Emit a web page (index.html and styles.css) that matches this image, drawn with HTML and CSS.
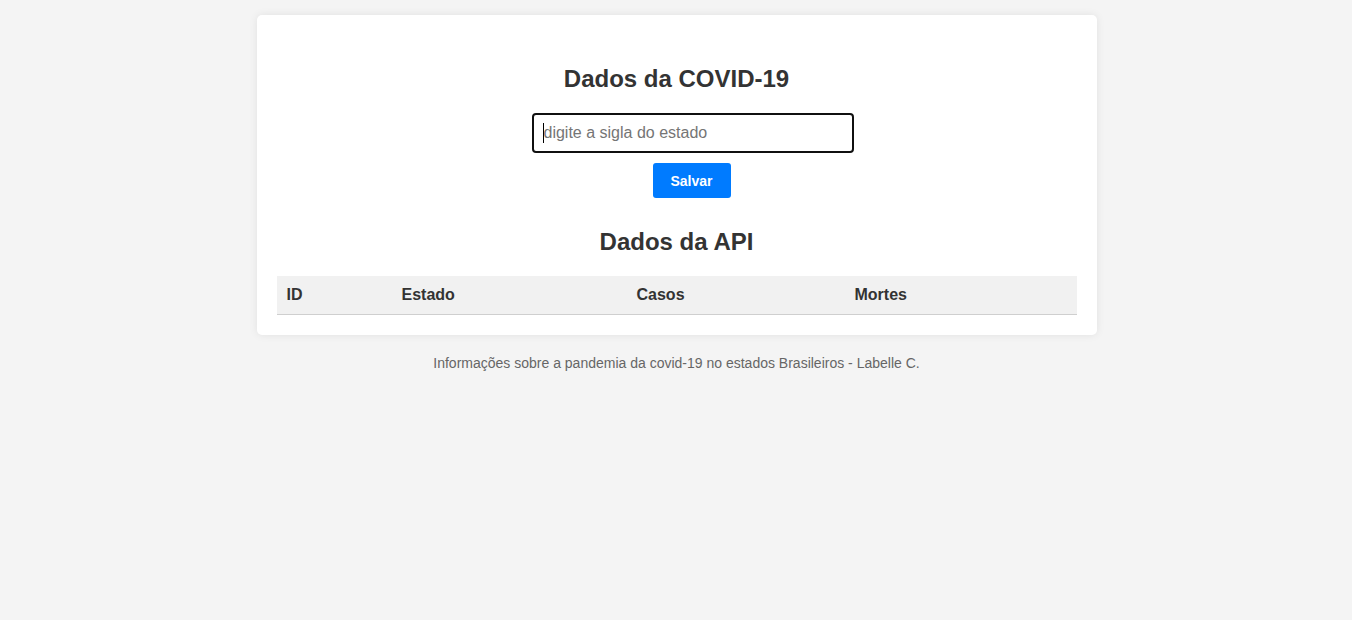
FILE: index.html
```html
<!DOCTYPE html>
<html lang="pt-BR">
<head>
<meta charset="utf-8">
<title>Dados da COVID-19</title>
<link rel="stylesheet" href="styles.css">
</head>
<body>
  <main class="card">
    <h2 class="title">Dados da COVID-19</h2>
    <form class="form">
      <div class="field">
        <input class="input" type="text" placeholder="digite a sigla do estado">
        <span class="caret"></span>
      </div>
      <button class="btn" type="button">Salvar</button>
    </form>
    <h2 class="title">Dados da API</h2>
    <table class="table">
      <thead>
        <tr>
          <th class="c-id">ID</th>
          <th class="c-estado">Estado</th>
          <th class="c-casos">Casos</th>
          <th class="c-mortes">Mortes</th>
        </tr>
      </thead>
      <tbody></tbody>
    </table>
  </main>
  <footer class="footer">Informações sobre a pandemia da covid-19 no estados Brasileiros - Labelle C.</footer>
</body>
</html>
```
FILE: styles.css
```css
html, body {
  margin: 0;
  padding: 0;
}
body {
  background: #f4f4f4;
  font-family: "Liberation Sans", Arial, sans-serif;
  color: #333;
  padding: 15px 0 0 1px;
}
.card {
  max-width: 800px;
  margin: 0 auto;
  background: #fff;
  padding: 30px 20px 20px;
  border-radius: 5px;
  box-shadow: 0 0 8px rgba(0, 0, 0, 0.08);
}
.title {
  font-size: 24px;
  font-weight: bold;
  text-align: center;
  margin: 20px 0;
  color: #333;
}
.form {
  display: flex;
  flex-direction: column;
  align-items: center;
  padding-left: 32px;
}
.field {
  position: relative;
}
.input {
  box-sizing: border-box;
  width: 322px;
  height: 40px;
  padding: 0 10px;
  border: 2px solid #101010;
  border-radius: 4px;
  font-family: "Liberation Sans", Arial, sans-serif;
  font-size: 16px;
  color: #333;
  outline: none;
  display: block;
}
.input::placeholder {
  color: #757575;
}
.caret {
  position: absolute;
  left: 11px;
  top: 10px;
  width: 1px;
  height: 20px;
  background: #000;
}
.btn {
  margin: 10px 2px 10px 0;
  width: 78px;
  height: 35px;
  background: #007bff;
  color: #fff;
  border: none;
  border-radius: 3px;
  font-family: "Liberation Sans", Arial, sans-serif;
  font-size: 14px;
  font-weight: bold;
  padding: 0;
}
.table {
  width: 100%;
  border-collapse: collapse;
}
.table th {
  background: #f1f1f1;
  text-align: left;
  font-size: 16px;
  font-weight: bold;
  color: #333;
  padding: 0 10px;
  height: 38px;
  border-bottom: 1px solid #cfcfcf;
}
.c-id { width: 95px; }
.c-estado { width: 215px; }
.c-casos { width: 198px; }
.footer {
  text-align: center;
  font-size: 14px;
  color: #666;
  margin-top: 20px;
  line-height: 16px;
}
```
